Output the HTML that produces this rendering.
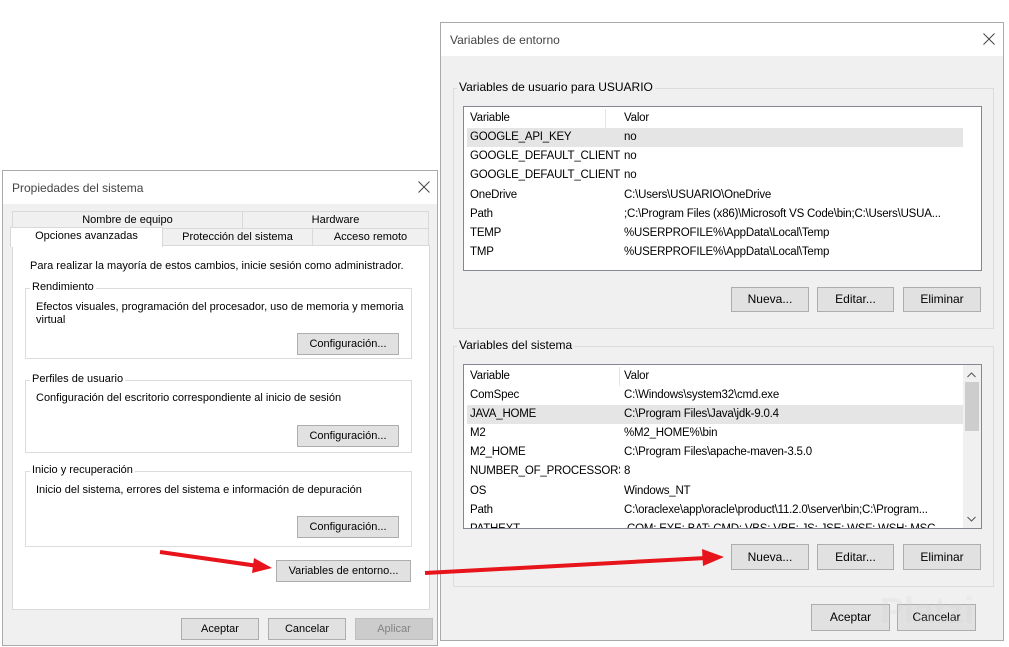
<!DOCTYPE html>
<html><head><meta charset="utf-8"><style>
*{margin:0;padding:0;box-sizing:border-box}
body{width:1009px;height:647px;background:#fff;position:relative;overflow:hidden;font-family:"Liberation Sans",sans-serif;font-size:11px;color:#000}
.a{position:absolute}
.win{position:absolute;background:#f0f0f0;border:1px solid #aaa}
.tb{position:absolute;left:0;right:0;top:0;height:33px;background:#fff}
.t{position:absolute;white-space:nowrap}
.btn{position:absolute;background:#e1e1e1;border:1px solid #adadad;text-align:center;white-space:nowrap}
.grp{position:absolute;border:1px solid #dcdcdc}
.lbl{position:absolute;background:#f0f0f0;padding:0 2px;white-space:nowrap}
.tab{position:absolute;background:#f0f0f0;border:1px solid #d9d9d9;text-align:center;white-space:nowrap}
.list{position:absolute;background:#fff;border:1px solid #828790;font-size:11.5px;letter-spacing:-0.2px}
.r{position:absolute;left:3px;height:19px;line-height:19px;white-space:nowrap}
.r span{position:absolute}
.r span:first-child{width:150px;overflow:hidden}
</style></head><body>

<!-- left window -->
<div class="win" style="left:2px;top:170px;width:436px;height:476px">
 <div class="tb"></div>
 <div class="t" style="left:9px;top:10px;font-size:12px;color:#444">Propiedades del sistema</div>
 <svg class="a" style="left:415px;top:10px" width="12" height="12"><path d="M0.5 0.5L11.5 11.5M11.5 0.5L0.5 11.5" stroke="#444" stroke-width="1"/></svg>
</div>
<div class="tab" style="left:12px;top:211px;width:231px;height:18px;line-height:16px">Nombre de equipo</div>
<div class="tab" style="left:242px;top:211px;width:187px;height:18px;line-height:16px">Hardware</div>
<div class="tab" style="left:162px;top:228px;width:151px;height:18px;line-height:16px">Protección del sistema</div>
<div class="tab" style="left:312px;top:228px;width:117px;height:18px;line-height:16px">Acceso remoto</div>
<div class="a" style="left:12px;top:245px;width:418px;height:365px;background:#fff;border:1px solid #d9d9d9"></div>
<div class="a" style="left:10px;top:227px;width:153px;height:20px;background:#fff;border:1px solid #d9d9d9;border-bottom:none;text-align:center;line-height:17px">Opciones avanzadas</div>
<div class="t" style="left:30px;top:260px">Para realizar la mayoría de estos cambios, inicie sesión como administrador.</div>

<div class="grp" style="left:25px;top:288px;width:387px;height:71px"></div>
<div class="lbl" style="left:30px;top:281px;background:#fff">Rendimiento</div>
<div class="t" style="left:36px;top:301px;line-height:13px">Efectos visuales, programación del procesador, uso de memoria y memoria<br>virtual</div>
<div class="btn" style="left:297px;top:333px;width:102px;height:22px;line-height:20px">Configuración...</div>

<div class="grp" style="left:25px;top:380px;width:387px;height:73px"></div>
<div class="lbl" style="left:30px;top:373px;background:#fff">Perfiles de usuario</div>
<div class="t" style="left:36px;top:392px">Configuración del escritorio correspondiente al inicio de sesión</div>
<div class="btn" style="left:297px;top:425px;width:102px;height:22px;line-height:20px">Configuración...</div>

<div class="grp" style="left:25px;top:471px;width:387px;height:76px"></div>
<div class="lbl" style="left:30px;top:464px;background:#fff">Inicio y recuperación</div>
<div class="t" style="left:36px;top:484px">Inicio del sistema, errores del sistema e información de depuración</div>
<div class="btn" style="left:297px;top:516px;width:102px;height:22px;line-height:20px">Configuración...</div>

<div class="btn" style="left:276px;top:560px;width:135px;height:22px;line-height:20px">Variables de entorno...</div>

<div class="btn" style="left:181px;top:618px;width:78px;height:22px;line-height:20px">Aceptar</div>
<div class="btn" style="left:268px;top:618px;width:78px;height:22px;line-height:20px">Cancelar</div>
<div class="btn" style="left:355px;top:618px;width:78px;height:22px;line-height:20px;background:#ccc;border-color:#bfbfbf;color:#838383">Aplicar</div>

<!-- right window -->
<div class="win" style="left:440px;top:22px;width:564px;height:619px;font-size:12px">
 <div class="tb"></div>
 <div class="t" style="left:9px;top:10px;color:#444">Variables de entorno</div>
 <svg class="a" style="left:542px;top:10px" width="12" height="12"><path d="M0.5 0.5L11.5 11.5M11.5 0.5L0.5 11.5" stroke="#444" stroke-width="1"/></svg>
</div>

<div class="grp" style="left:453px;top:88px;width:541px;height:241px"></div>
<div class="lbl" style="left:457px;top:80px;font-size:12px">Variables de usuario para USUARIO</div>
<div class="list" style="left:463px;top:106px;width:519px;height:165px">
 <div class="a" style="left:141px;top:2px;width:1px;height:19px;background:#e5e5e5"></div>
 <div class="a" style="left:3px;top:21px;width:496px;height:19px;background:#e5e5e5"></div>
 <div class="r" style="top:2px;left:6px"><span>Variable</span><span style="left:154px">Valor</span></div>
 <div class="r" style="top:21px;left:6px"><span>GOOGLE_API_KEY</span><span style="left:154px">no</span></div>
 <div class="r" style="top:40px;left:6px"><span>GOOGLE_DEFAULT_CLIENT...</span><span style="left:154px">no</span></div>
 <div class="r" style="top:59px;left:6px"><span>GOOGLE_DEFAULT_CLIENT...</span><span style="left:154px">no</span></div>
 <div class="r" style="top:79px;left:6px"><span>OneDrive</span><span style="left:154px">C:\Users\USUARIO\OneDrive</span></div>
 <div class="r" style="top:98px;left:6px"><span>Path</span><span style="left:154px;width:330px;overflow:hidden">;C:\Program Files (x86)\Microsoft VS Code\bin;C:\Users\USUA...</span></div>
 <div class="r" style="top:117px;left:6px"><span>TEMP</span><span style="left:154px">%USERPROFILE%\AppData\Local\Temp</span></div>
 <div class="r" style="top:136px;left:6px"><span>TMP</span><span style="left:154px">%USERPROFILE%\AppData\Local\Temp</span></div>
</div>
<div class="btn" style="left:731px;top:287px;width:78px;height:25px;line-height:23px;font-size:12px">Nueva...</div>
<div class="btn" style="left:817px;top:287px;width:77px;height:25px;line-height:23px;font-size:12px">Editar...</div>
<div class="btn" style="left:903px;top:287px;width:78px;height:25px;line-height:23px;font-size:12px">Eliminar</div>

<div class="grp" style="left:453px;top:346px;width:541px;height:241px"></div>
<div class="lbl" style="left:457px;top:338px;font-size:12px">Variables del sistema</div>
<div class="list" style="left:463px;top:364px;width:519px;height:165px;overflow:hidden">
 <div class="a" style="left:155px;top:2px;width:1px;height:19px;background:#e5e5e5"></div>
 <div class="a" style="left:3px;top:40px;width:496px;height:19px;background:#e5e5e5"></div>
 <div class="a" style="left:499px;top:0;width:18px;height:163px;background:#f0f0f0"></div>
 <div class="a" style="left:501px;top:17px;width:14px;height:49px;background:#cdcdcd"></div>
 <svg class="a" style="left:503px;top:7px" width="9" height="6"><path d="M0.5 5L4.5 1L8.5 5" stroke="#555" fill="none"/></svg>
 <svg class="a" style="left:503px;top:151px" width="9" height="6"><path d="M0.5 1L4.5 5L8.5 1" stroke="#555" fill="none"/></svg>
 <div class="r" style="top:2px;left:6px"><span>Variable</span><span style="left:154px">Valor</span></div>
 <div class="r" style="top:21px;left:6px"><span>ComSpec</span><span style="left:154px">C:\Windows\system32\cmd.exe</span></div>
 <div class="r" style="top:40px;left:6px"><span>JAVA_HOME</span><span style="left:154px">C:\Program Files\Java\jdk-9.0.4</span></div>
 <div class="r" style="top:59px;left:6px"><span>M2</span><span style="left:154px">%M2_HOME%\bin</span></div>
 <div class="r" style="top:78px;left:6px"><span>M2_HOME</span><span style="left:154px">C:\Program Files\apache-maven-3.5.0</span></div>
 <div class="r" style="top:97px;left:6px"><span>NUMBER_OF_PROCESSORS</span><span style="left:154px">8</span></div>
 <div class="r" style="top:117px;left:6px"><span>OS</span><span style="left:154px">Windows_NT</span></div>
 <div class="r" style="top:136px;left:6px"><span>Path</span><span style="left:154px;width:332px;overflow:hidden">C:\oraclexe\app\oracle\product\11.2.0\server\bin;C:\Program...</span></div>
 <div class="r" style="top:155px;left:6px"><span>PATHEXT</span><span style="left:154px">.COM;.EXE;.BAT;.CMD;.VBS;.VBE;.JS;.JSE;.WSF;.WSH;.MSC</span></div>
</div>
<div class="btn" style="left:731px;top:544px;width:78px;height:26px;line-height:24px;font-size:12px">Nueva...</div>
<div class="btn" style="left:817px;top:544px;width:77px;height:26px;line-height:24px;font-size:12px">Editar...</div>
<div class="btn" style="left:903px;top:544px;width:78px;height:26px;line-height:24px;font-size:12px">Eliminar</div>

<div class="btn" style="left:811px;top:604px;width:79px;height:27px;line-height:25px;font-size:12px">Aceptar</div>
<div class="btn" style="left:897px;top:604px;width:79px;height:27px;line-height:25px;font-size:12px">Cancelar</div>
<div class="t" style="left:880px;top:590px;font-size:36px;color:rgba(210,210,210,0.25);font-weight:bold">Platzi</div>

<svg class="a" style="left:0;top:0" width="1009" height="647">
 <line x1="160" y1="552" x2="258" y2="566" stroke="#e8141b" stroke-width="4"/>
 <polygon points="272,568 254,558 252,573" fill="#e8141b"/>
 <line x1="425" y1="573" x2="706" y2="558" stroke="#e8141b" stroke-width="4"/>
 <polygon points="724,557 702,549 703,566" fill="#e8141b"/>
</svg>
</body></html>
